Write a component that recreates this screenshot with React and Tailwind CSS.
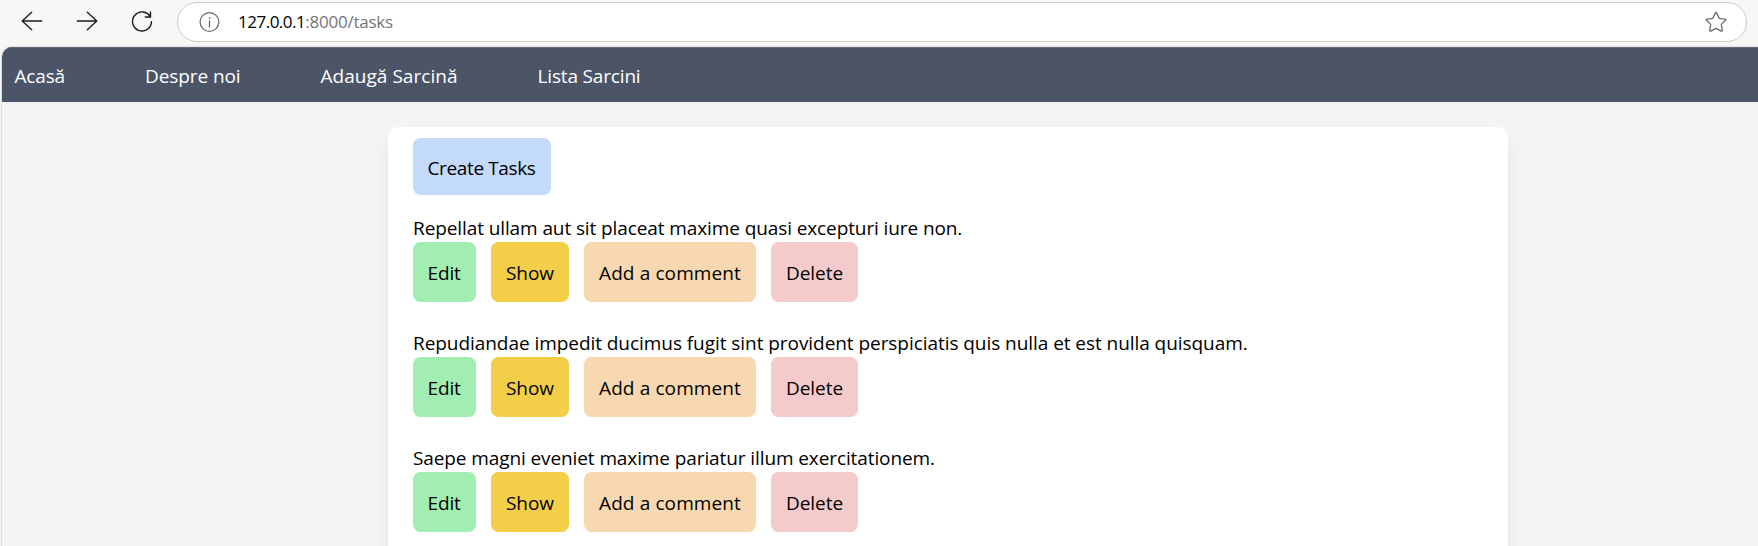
const navItems = [
  { label: "Acasă", style: "w-[50.5px] tracking-[-0.157px]" },
  { label: "Despre noi", style: "w-[95.5px] tracking-[-0.088px]" },
  { label: "Adaugă Sarcină", style: "w-[137px] tracking-[0.035px]" },
  { label: "Lista Sarcini", style: "w-[104px] tracking-[-0.163px]" },
];

const tasks = [
  {
    title: "Repellat ullam aut sit placeat maxime quasi excepturi iure non.",
    tracking: "tracking-[-0.1px]",
  },
  {
    title:
      "Repudiandae impedit ducimus fugit sint provident perspiciatis quis nulla et est nulla quisquam.",
    tracking: "tracking-[-0.055px]",
  },
  {
    title: "Saepe magni eveniet maxime pariatur illum exercitationem.",
    tracking: "tracking-[-0.1px]",
  },
];

const actions = [
  { label: "Edit", style: "w-[63px] bg-[#a2eeb2] pl-[14.5px] tracking-[-0.15px]" },
  { label: "Show", style: "w-[78px] bg-[#f2ce49] pl-[15px] tracking-[-0.056px]" },
  { label: "Add a comment", style: "w-[172px] bg-[#f7d8b0] pl-[15px] tracking-[0.116px]" },
  { label: "Delete", style: "w-[87px] bg-[#f4cbca] pl-[15px] tracking-[-0.06px]" },
];

function Icon({ children, className = "" }) {
  return (
    <svg
      viewBox="0 0 24 24"
      className={`size-6 shrink-0 ${className}`}
      fill="none"
      stroke="currentColor"
      strokeWidth="1.3"
      strokeLinecap="round"
      strokeLinejoin="round"
    >
      {children}
    </svg>
  );
}

function BrowserBar() {
  return (
    <header className="flex h-[47px] shrink-0 items-start bg-[#f7f7f7] pt-[2px] pr-[11px] pl-[20px]">
      <div className="mt-[7px] mr-[23px] flex gap-[31px] text-[#1b1b1b]">
        <Icon>
          <path d="M21.7 12H2.2M11.7 3.2L2.2 12l9.5 8.8" />
        </Icon>
        <Icon>
          <path d="M2.3 12h19.5M12.3 3.2L21.8 12l-9.5 8.8" />
        </Icon>
        <Icon>
          <path
            d="M21.5 12.6A9.5 9.5 0 1 1 20.3 7.8M20.5 2.9v5.1h-5.2"
            strokeWidth="1.4"
            strokeLinejoin="miter"
          />
        </Icon>
      </div>
      <div className="flex h-10 flex-1 items-center rounded-full border border-[#cbcbcb] bg-white pr-[18px] pl-[19px]">
        <Icon className="text-[#6b6b6b]">
          <circle cx="12.5" cy="12" r="9.4" />
          <path d="M12.5 11v6" />
          <circle cx="12.5" cy="8" r=".5" fill="currentColor" strokeWidth=".6" />
        </Icon>
        <div className="ml-[17px] flex-1 text-[17px] leading-6 whitespace-nowrap text-[#757575]">
          <span className="tracking-[-0.5px] text-black">127.0.0.1</span>
          <span className="tracking-[-0.23px]">:8000/tasks</span>
        </div>
        <Icon className="text-[#6b6b6b]">
          <path d="M11.3 3.1q.7-1.3 1.4 0l2.5 5.2 5.8.8q1.3.3.5 1.2l-4.2 4.1 1 5.8q0 1.3-1.1.9L12 18.4l-5.2 2.7q-1.1.4-1.1-.9l1-5.8-4.2-4.1q-.8-.9.5-1.2l5.8-.8z" />
        </Icon>
      </div>
    </header>
  );
}

export default function App() {
  return (
    <div className="flex h-[546px] flex-col overflow-hidden bg-[#f7f7f7] font-['Open_Sans','Noto_Sans',sans-serif] text-[19px] text-black">
      <BrowserBar />
      <div className="ml-[2px] flex flex-1 flex-col overflow-hidden rounded-tl-[10px] bg-[#f4f4f2] shadow-[0_0_1px_1px_#dedede]">
        <nav className="flex h-[55px] shrink-0 items-center gap-[80px] border-t border-[#626b78] bg-[#4b5567] pt-[3px] pl-[12.5px] text-white">
          {navItems.map((item) => (
            <a key={item.label} className={`whitespace-nowrap ${item.style}`}>
              {item.label}
            </a>
          ))}
        </nav>
        <main className="mt-[25px] ml-[386px] h-[600px] w-[1120px] shrink-0 rounded-[10px] bg-white px-[25px] pt-[11px] shadow-[0_12px_19px_-4px_rgba(0,0,0,0.1),0_5px_8px_-5px_rgba(0,0,0,0.1)]">
          <button className="flex h-[57px] w-[138px] items-center rounded-[7.5px] bg-[#c4dafa] pt-[4px] pl-[14.5px] tracking-[-0.371px] whitespace-nowrap">
            Create Tasks
          </button>
          <ul className="mt-[17px] flex flex-col gap-[25px]">
            {tasks.map((task) => (
              <li key={task.title}>
                <p className={`h-[30px] leading-[32px] whitespace-nowrap ${task.tracking}`}>
                  {task.title}
                </p>
                <div className="flex gap-[15px]">
                  {actions.map((action) => (
                    <button
                      key={action.label}
                      className={`flex h-[60px] items-center rounded-[7.5px] pt-[3px] whitespace-nowrap ${action.style}`}
                    >
                      {action.label}
                    </button>
                  ))}
                </div>
              </li>
            ))}
          </ul>
        </main>
      </div>
    </div>
  );
}
